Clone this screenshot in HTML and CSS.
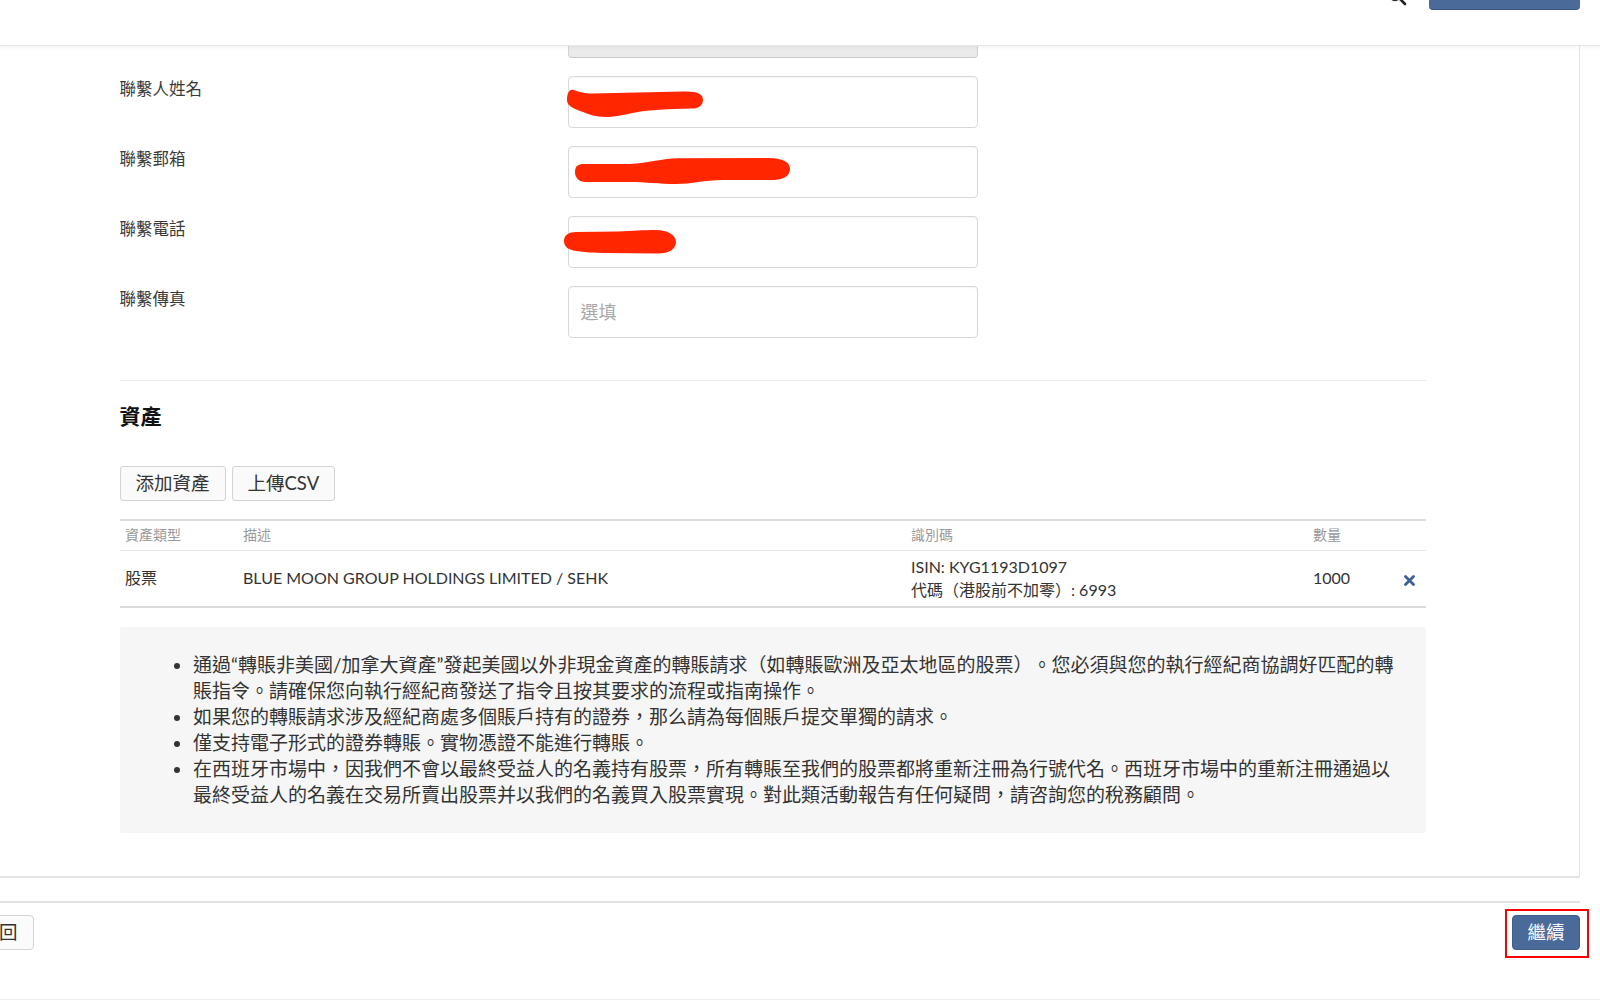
FILE: index.html
```html
<!DOCTYPE html>
<html lang="zh-Hant">
<head>
    <meta charset="UTF-8">
    <meta name="viewport" content="width=device-width, initial-scale=1.0">
    <title>轉賬非美國/加拿大資產</title>
    <link rel="stylesheet" href="styles.css">
</head>
<body>
    <header class="topbar">
        <div class="topbar-actions">
            <svg class="search-icon" width="20" height="20" viewBox="0 0 20 20">
                <circle cx="8" cy="8" r="6" fill="none" stroke="#222" stroke-width="2.4"/>
                <path d="M12.4 12.4 L18 18" stroke="#222" stroke-width="2.6" stroke-linecap="round"/>
            </svg>
            <a class="btn-top" href="#"></a>
        </div>
    </header>

    <main class="panel">
        <div class="panel-body">
            <section class="contact-form">
                <div class="form-row">
                    <label class="form-label"></label>
                    <div class="field"><input class="form-input" type="text" disabled></div>
                </div>
                <div class="form-row">
                    <label class="form-label">聯繫人姓名</label>
                    <div class="field">
                        <input class="form-input" type="text">
                        <!-- redaction mark -->
                        <svg class="scribble" viewBox="0 0 410 52">
                            <path d="M-1 24 C-1 16 2 13 6 14 C12 16 16 17.5 24 17.5 L115 15.5 C130 15 135 18 135 24 C135 30 130 32.5 124 32.5 C100 33 80 34 70 36 C55 39 45 41 38 41 C28 41 20 38 12 35 C4 32 -1 29 -1 24 Z"/>
                        </svg>
                    </div>
                </div>
                <div class="form-row">
                    <label class="form-label">聯繫郵箱</label>
                    <div class="field">
                        <input class="form-input" type="text">
                        <svg class="scribble" viewBox="0 0 410 52">
                            <path d="M7 26 C7 20 10 18 16 18 L62 18 C80 17 95 12.5 110 12.3 L200 12 C215 12 222 16 222 23 C222 30 215 34 205 34 L155 34 C135 34 125 38 108 38 C90 38 80 36 60 36 L18 36 C11 36 7 32 7 26 Z"/>
                        </svg>
                    </div>
                </div>
                <div class="form-row">
                    <label class="form-label">聯繫電話</label>
                    <div class="field">
                        <input class="form-input" type="text">
                        <svg class="scribble" viewBox="0 0 410 52">
                            <path d="M-4 25 C-4 19 1 16 8 16 L50 15.5 C65 15 75 14 88 14 C100 14 108 19 108 26 C108 33 101 37.5 90 37.5 L40 37 C25 37 15 36 8 35 C1 34 -4 31 -4 25 Z"/>
                        </svg>
                    </div>
                </div>
                <div class="form-row">
                    <label class="form-label">聯繫傳真</label>
                    <div class="field"><input class="form-input" type="text" placeholder="選填"></div>
                </div>
            </section>

            <hr class="divider">

            <h2 class="section-title">資產</h2>

            <div class="asset-actions">
                <button class="btn">添加資產</button>
                <button class="btn">上傳CSV</button>
            </div>

            <table class="asset-table">
                <colgroup>
                    <col style="width: 118px">
                    <col style="width: 668px">
                    <col style="width: 402px">
                    <col style="width: 82px">
                    <col>
                </colgroup>
                <thead>
                    <tr>
                        <th>資產類型</th>
                        <th>描述</th>
                        <th>識別碼</th>
                        <th>數量</th>
                        <th></th>
                    </tr>
                </thead>
                <tbody>
                    <tr>
                        <td>股票</td>
                        <td>BLUE MOON GROUP HOLDINGS LIMITED / SEHK</td>
                        <td>ISIN: KYG1193D1097<br>代碼（港股前不加零）: 6993</td>
                        <td>1000</td>
                        <td class="remove-cell">
                            <svg class="remove-icon" width="11" height="11" viewBox="0 0 11 11">
                                <path d="M1.5 1.5 L9.5 9.5 M9.5 1.5 L1.5 9.5" stroke="#3f5f96" stroke-width="2.8" stroke-linecap="round"/>
                            </svg>
                        </td>
                    </tr>
                </tbody>
            </table>

            <div class="notice">
                <ul>
                    <li>通過“轉賬非美國/加拿大資產”發起美國以外非現金資產的轉賬請求（如轉賬歐洲及亞太地區的股票）。您必須與您的執行經紀商協調好匹配的轉賬指令。請確保您向執行經紀商發送了指令且按其要求的流程或指南操作。</li>
                    <li>如果您的轉賬請求涉及經紀商處多個賬戶持有的證券，那么請為每個賬戶提交單獨的請求。</li>
                    <li>僅支持電子形式的證券轉賬。實物憑證不能進行轉賬。</li>
                    <li>在西班牙市場中，因我們不會以最終受益人的名義持有股票，所有轉賬至我們的股票都將重新注冊為行號代名。西班牙市場中的重新注冊通過以最終受益人的名義在交易所賣出股票并以我們的名義買入股票實現。對此類活動報告有任何疑問，請咨詢您的稅務顧問。</li>
                </ul>
            </div>
        </div>
    </main>

    <footer class="page-footer">
        <button class="btn btn-back">返回</button>
        <span class="highlight">
            <button class="btn btn-primary">繼續</button>
        </span>
    </footer>
    <div class="page-end"></div>
</body>
</html>
```

FILE: styles.css
```css
* {
    box-sizing: border-box;
}

body {
    margin: 0;
    background: #fff;
    color: #333;
    font-family: Lato, "Noto Sans CJK TC", sans-serif;
    overflow: hidden;
}

/* top bar (page is scrolled, only its lower part shows) */
.topbar {
    position: fixed;
    top: 0;
    left: 0;
    right: 0;
    height: 46px;
    background: #fff;
    border-bottom: 1px solid #e6e6e6;
    box-shadow: 0 2px 4px rgba(0, 0, 0, 0.04);
    z-index: 10;
}

.topbar-actions {
    width: 1580px;
    height: 10px;
    display: flex;
    justify-content: flex-end;
    align-items: flex-end;
    gap: 22px;
}

.search-icon {
    flex: none;
    margin-bottom: 4px;
}

.btn-top {
    flex: none;
    width: 151px;
    height: 36px;
    background: #4a6a9a;
    border-bottom: 1px solid #3a5784;
    border-radius: 0 0 4px 4px;
}

/* main panel */
.panel {
    width: 1580px;
    border-right: 1px solid #e4e4e4;
    border-bottom: 2px solid #e4e4e4;
}

.panel-body {
    width: 1306px;
    margin-left: 119.5px;
    padding: 6px 0 43px;
}

.form-row {
    display: grid;
    grid-template-columns: 448px 410px;
    margin-bottom: 18px;
}

.form-label {
    font-size: 16.5px;
    line-height: 22px;
    padding-top: 2px;
    color: #3a3a3a;
}

.field {
    position: relative;
}

.form-input {
    display: block;
    width: 100%;
    height: 52px;
    padding: 0 12px;
    border: 1px solid #d8d8d8;
    border-radius: 4px;
    box-shadow: inset 0 1px 2px rgba(0, 0, 0, 0.04);
    background: #fff;
    font-family: inherit;
    font-size: 18px;
    color: #333;
}

.form-input::placeholder {
    color: #a8a8a8;
}

.form-input:disabled {
    background: #ebebeb;
    border-color: #d4d4d4;
    border-bottom-color: #c8c8c8;
}

.scribble {
    position: absolute;
    left: 0;
    top: 0;
    width: 410px;
    height: 52px;
    overflow: visible;
    pointer-events: none;
}

.scribble path {
    fill: #ff2600;
}

.divider {
    margin: 42px 0 0;
    border: 0;
    border-top: 1px solid #e9e9e9;
}

.section-title {
    margin: 20.5px 0 0;
    font-size: 21px;
    line-height: 28px;
    font-weight: bold;
    color: #111;
}

.asset-actions {
    display: flex;
    gap: 6px;
    margin-top: 36.5px;
}

.btn {
    height: 35px;
    padding: 0 15px;
    border: 1px solid #d4d4d4;
    border-radius: 3px;
    background: #fafafa;
    font-family: inherit;
    font-size: 18.5px;
    line-height: 33px;
    color: #333;
    cursor: pointer;
}

/* asset table */
.asset-table {
    width: 100%;
    margin-top: 18px;
    table-layout: fixed;
    border-collapse: separate;
    border-spacing: 0;
}

.asset-table th {
    padding: 3px 5.5px 5px;
    border-top: 2px solid #dedede;
    border-bottom: 1px solid #e6e6e6;
    font-size: 14px;
    line-height: 21px;
    font-weight: normal;
    color: #999;
    text-align: left;
}

.asset-table td {
    padding: 5px 5.5px;
    border-bottom: 2px solid #dadada;
    font-size: 16px;
    line-height: 22.5px;
    color: #333;
    vertical-align: middle;
}

.remove-cell {
    text-align: center;
}

.remove-icon {
    display: inline-block;
    vertical-align: middle;
    margin-left: 4px;
}

/* notes */
.notice {
    margin-top: 19px;
    padding: 25px 22px 25px 0;
    background: #f6f6f6;
    border-radius: 2px;
}

.notice ul {
    margin: 0;
    padding-left: 73.5px;
    font-size: 19px;
    line-height: 26px;
    color: #333;
    text-spacing-trim: space-all;
}

/* footer */
.page-footer {
    width: 1580px;
    margin-top: 23px;
    padding: 12px 0 49px;
    border-top: 2px solid #e2e2e2;
    display: flex;
    justify-content: space-between;
    align-items: center;
}

.btn-back {
    margin-left: -35.5px;
    border-radius: 4px;
    background: #fbfbfb;
}

.highlight {
    position: relative;
    display: inline-block;
}

.highlight::after {
    content: '';
    position: absolute;
    left: -7px;
    right: -8.5px;
    top: -6.5px;
    bottom: -7.5px;
    border: 2.5px solid #f00;
    pointer-events: none;
}

.btn-primary {
    display: block;
    padding: 0 14.5px;
    background: #4a6a9a;
    border-color: #3f5d8c;
    border-radius: 4px;
    color: #fff;
}

.page-end {
    border-top: 1px solid #ececec;
}
```
